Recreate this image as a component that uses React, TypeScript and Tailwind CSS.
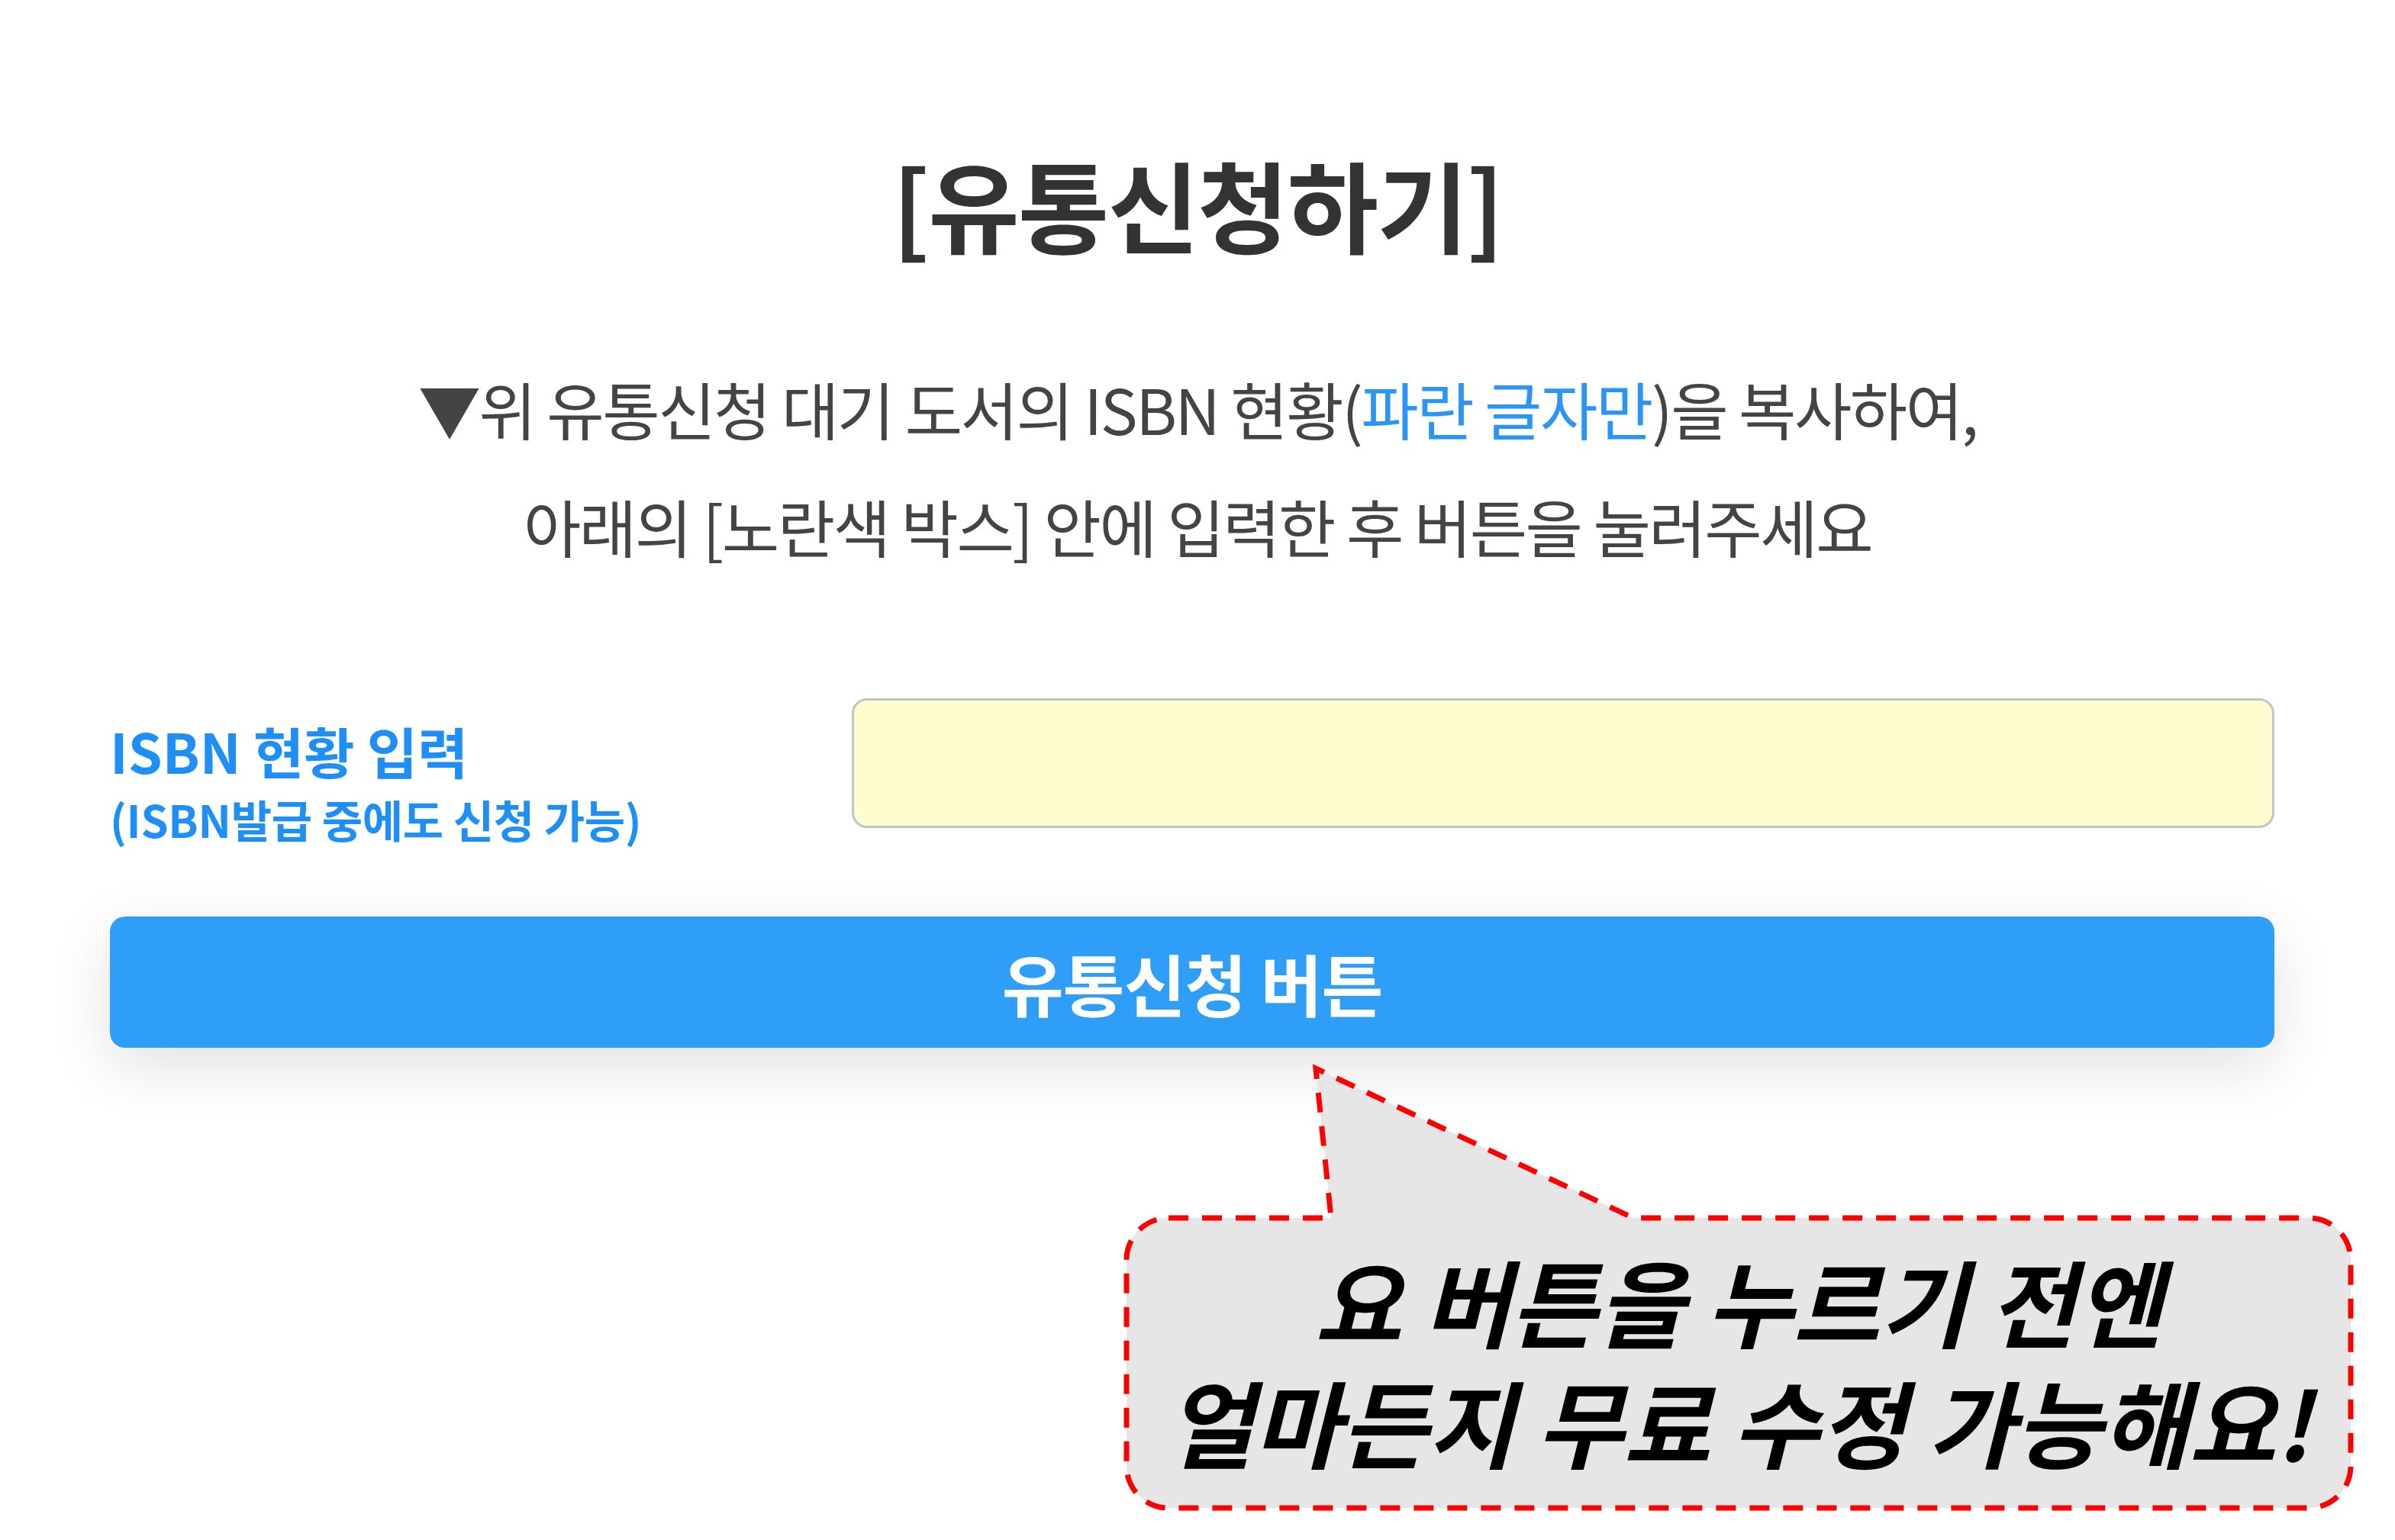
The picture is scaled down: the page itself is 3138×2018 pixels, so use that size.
export default function App() {
  return (
    <div className="relative min-h-screen bg-white font-['Noto_Sans_CJK_KR','Noto_Sans',sans-serif] overflow-hidden">
      {/* Title */}
      <h1 className="pt-[200px] text-center text-[130px] leading-[130px] font-bold text-[#333] tracking-[-2px]">
        [유통신청하기]
      </h1>

      {/* Instructions */}
      <div className="mt-[128px] text-center text-[82px] leading-[154px] text-[#444] tracking-[-2.5px]">
        <p>
          ▼위 유통신청 대기 도서의 ISBN 현황(<span className="text-[#2b95f5]">파란 글자만</span>)을 복사하여,
        </p>
        <p>아래의 [노란색 박스] 안에 입력한 후 버튼을 눌러주세요</p>
      </div>

      {/* Form */}
      <div className="mt-[149px] pl-[144px] pr-[158px]">
        <div className="flex items-start">
          <div className="w-[972px] pt-[16px] text-[#1e8ff7] font-bold">
            <div className="text-[72px] leading-[104px]">ISBN 현황 입력</div>
            <div className="text-[58px] leading-[76px] tracking-[-0.3px]">(ISBN발급 중에도 신청 가능)</div>
          </div>
          <input
            type="text"
            className="flex-1 h-[170px] rounded-[20px] border-[3px] border-[#c4c4c4] bg-[#fefdd0] outline-none"
          />
        </div>

        <button className="mt-[90px] w-full h-[172px] rounded-[20px] bg-[#2f9ef9] text-white text-[88px] font-bold tracking-[-1px] shadow-[0_24px_80px_rgba(0,0,0,0.12)]">
          유통신청 버튼
        </button>
      </div>

      {/* Callout bubble */}
      <svg
        className="absolute left-0 top-0 pointer-events-none"
        width="3138"
        height="2018"
        viewBox="0 0 3138 2018"
      >
        <path
          d="M 1531 1596 L 1744 1596 L 1724 1400 L 2140 1596 L 3025 1596 A 55 55 0 0 1 3080 1651 L 3080 1921 A 55 55 0 0 1 3025 1976 L 1531 1976 A 55 55 0 0 1 1476 1921 L 1476 1651 A 55 55 0 0 1 1531 1596 Z"
          fill="#e6e6e6"
          stroke="#ff0000"
          strokeWidth="7"
          strokeDasharray="26 18"
        />
      </svg>
      <div className="absolute left-[1476px] top-[1596px] w-[1604px] h-[380px] pb-[8px] flex flex-col items-center justify-center text-black font-bold italic text-[124px] leading-[158px]">
        <div>요 버튼을 누르기 전엔</div>
        <div>얼마든지 무료 수정 가능해요!</div>
      </div>
    </div>
  );
}
